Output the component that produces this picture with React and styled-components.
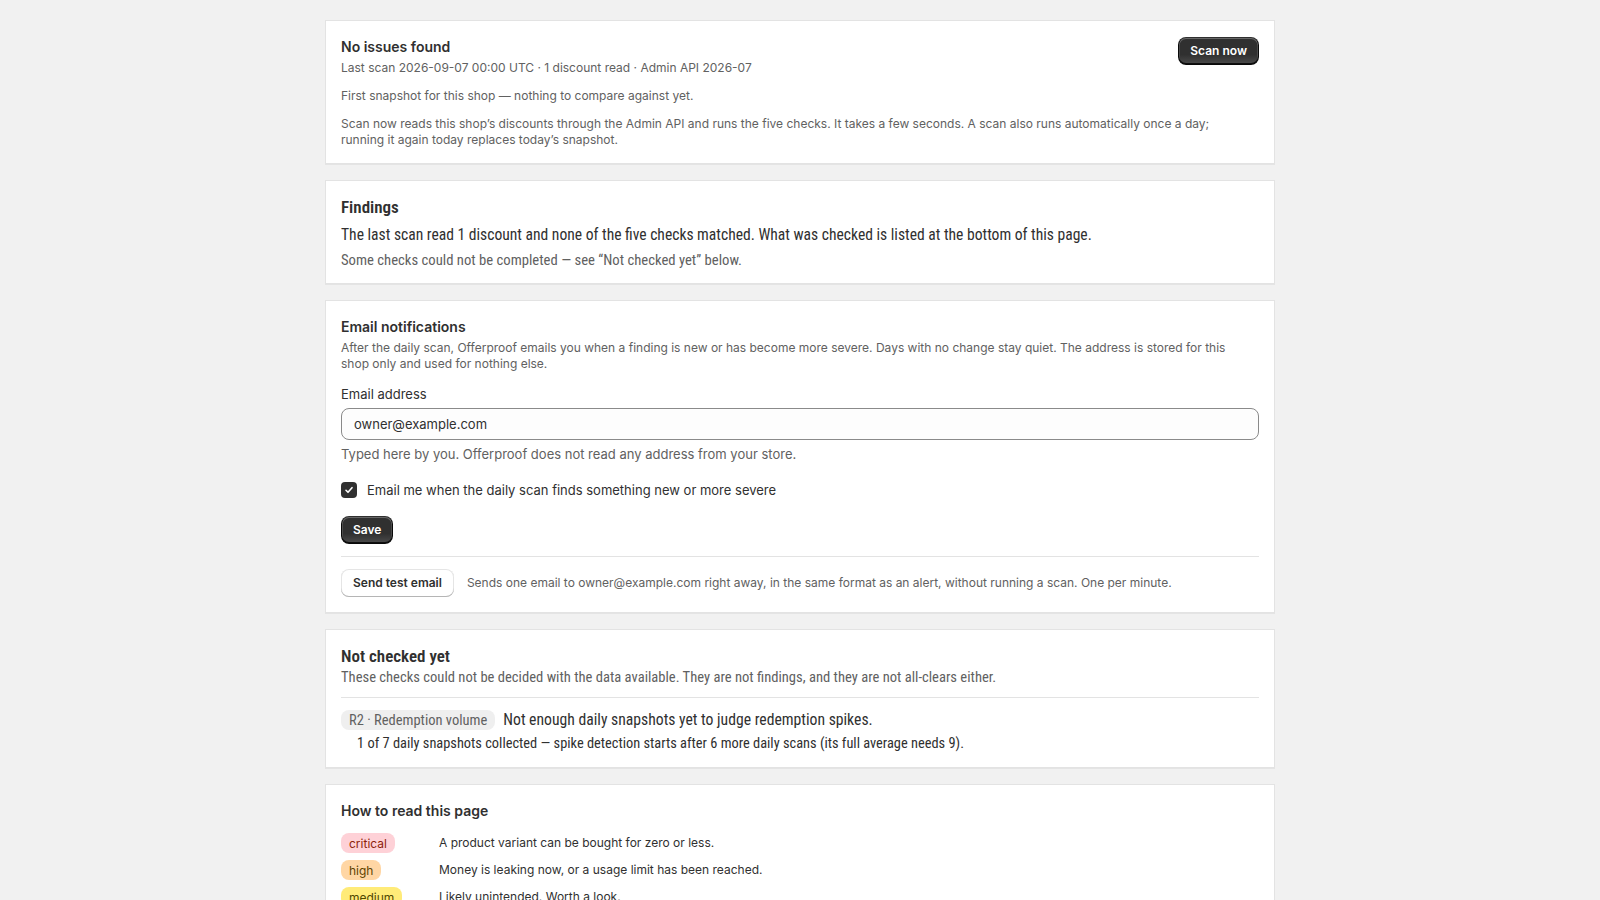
import React from "react";
import styled, { createGlobalStyle, css } from "styled-components";

const GlobalStyle = createGlobalStyle`
  html, body { margin: 0; padding: 0; background: #f1f1f1; }
  body {
    font-family: Inter, "Noto Sans", sans-serif;
    color: #303030;
    -webkit-font-smoothing: antialiased;
  }
  * { box-sizing: border-box; }
`;

const Page = styled.main`
  width: 950px;
  margin: 0 auto;
  padding: 20px 0;
  display: flex;
  flex-direction: column;
  gap: 16px;
`;

const narrowFont = css`
  font-family: "Roboto Condensed", Roboto, sans-serif;
  font-stretch: condensed;
`;

const Card = styled.section`
  background: #fff;
  border: 1px solid #e3e3e3;
  box-shadow: 0 1px 0 rgba(0, 0, 0, 0.05);
  padding: 17px 15px 15px;
  display: flex;
  flex-direction: column;
  gap: ${(p) => p.$gap || 0}px;
  ${(p) => p.$narrow && narrowFont}
`;

const HeaderRow = styled.div`
  display: flex;
  justify-content: space-between;
  align-items: flex-start;
  gap: 16px;
`;

const Title = styled.h2`
  margin: 0;
  font-size: ${(p) => (p.$narrow ? 17 : 14)}px;
  font-weight: 600;
  line-height: 18px;
  color: #303030;
`;

const Meta = styled.p`
  margin: ${(p) => p.$top || 0}px 0 0;
  max-width: 900px;
  font-size: ${(p) => p.$size || 12}px;
  line-height: 16px;
  color: #616161;
`;

const Lead = styled.p`
  margin: ${(p) => p.$top || 0}px 0 0;
  font-size: 15.6px;
  line-height: 20px;
  color: #303030;
`;

const buttonBase = css`
  display: inline-flex;
  align-items: center;
  justify-content: center;
  min-height: 28px;
  padding: 6px 12px;
  border: none;
  border-radius: 8px;
  font-family: Inter, sans-serif;
  font-size: 12px;
  font-weight: 600;
  line-height: 16px;
  cursor: pointer;
  white-space: nowrap;
  flex: none;
`;

const PrimaryButton = styled.button`
  ${buttonBase}
  color: #fff;
  background: #303030;
  background-image: linear-gradient(180deg, rgba(48, 48, 48, 0) 63%, rgba(255, 255, 255, 0.15) 100%);
  box-shadow: 0 -1px 0 1px rgba(0, 0, 0, 0.8) inset, 0 0 0 1px #303030 inset,
    0 0.5px 0 1.5px #666 inset;
  align-self: ${(p) => p.$align || "auto"};
  margin-top: ${(p) => p.$top || 0}px;
`;

const SecondaryButton = styled.button`
  ${buttonBase}
  color: #303030;
  background: #fff;
  box-shadow: 0 -1px 0 0 #b5b5b5 inset, 0 0 0 1px rgba(0, 0, 0, 0.1) inset,
    0 0.5px 0 1.5px #fff inset;
`;

const Field = styled.div`
  display: flex;
  flex-direction: column;
  margin-top: 12px;
`;

const Label = styled.label`
  font-size: 13px;
  line-height: 20px;
  color: #303030;
`;

const TextInput = styled.input`
  margin-top: 4px;
  height: 32px;
  padding: 0 12px;
  border: 1px solid #8a8a8a;
  border-radius: 8px;
  background: #fdfdfd;
  font-family: Inter, sans-serif;
  font-size: 13px;
  color: #303030;
  outline: none;
`;

const Help = styled.p`
  margin: 4px 0 0;
  font-size: 13px;
  line-height: 20px;
  color: #616161;
`;

const CheckRow = styled.label`
  display: flex;
  align-items: center;
  gap: 10px;
  margin-top: 16px;
  font-size: 13px;
  line-height: 20px;
  color: #303030;
`;

const CheckBox = styled.span`
  width: 16px;
  height: 16px;
  border-radius: 4px;
  background: #303030;
  display: inline-flex;
  align-items: center;
  justify-content: center;
  flex: none;
`;

const Divider = styled.hr`
  margin: ${(p) => p.$space || 12}px 0;
  border: none;
  border-top: 1px solid #e3e3e3;
`;

const TestRow = styled.div`
  display: flex;
  align-items: center;
  gap: 13px;
`;

const Hint = styled.span`
  font-size: 12px;
  line-height: 16px;
  color: #616161;
`;

const PendingRow = styled.div`
  display: flex;
  align-items: center;
  gap: 8px;
`;

const Tag = styled.span`
  display: inline-flex;
  align-items: center;
  height: 20px;
  padding: 0 8px;
  border-radius: 8px;
  background: #efefef;
  color: #616161;
  font-size: 14.5px;
`;

const PendingText = styled.span`
  font-size: 15.7px;
  line-height: 20px;
  color: #303030;
`;

const PendingDetail = styled.p`
  margin: 6px 0 0;
  padding-left: 16px;
  font-size: 14.4px;
  line-height: 16px;
  color: #303030;
`;

const Legend = styled.div`
  display: grid;
  grid-template-columns: 98px 1fr;
  row-gap: 7px;
  align-items: center;
  margin-top: 13px;
`;

const toneColors = {
  critical: { bg: "#fed1d7", fg: "#8e1f0b" },
  high: { bg: "#ffd6a4", fg: "#5e4200" },
  medium: { bg: "#ffeb78", fg: "#4f4700" },
  low: { bg: "#e0f0ff", fg: "#00527c" },
};

const Badge = styled.span`
  justify-self: start;
  display: inline-flex;
  align-items: center;
  height: 20px;
  padding: 0 8px;
  border-radius: 8px;
  font-size: 12px;
  background: ${(p) => toneColors[p.$tone].bg};
  color: ${(p) => toneColors[p.$tone].fg};
`;

const LegendText = styled.span`
  font-size: 12px;
  line-height: 20px;
  color: #303030;
`;

const CheckMark = () => (
  <svg width="12" height="12" viewBox="0 0 12 12" fill="none">
    <path d="M3 6.3l2 2 4-4.6" stroke="#fff" strokeWidth="1.6" strokeLinecap="round" strokeLinejoin="round" />
  </svg>
);

const legend = [
  { tone: "critical", text: "A product variant can be bought for zero or less." },
  { tone: "high", text: "Money is leaking now, or a usage limit has been reached." },
  { tone: "medium", text: "Likely unintended. Worth a look." },
  { tone: "low", text: "Worth knowing about, nothing urgent." },
];

export default function App() {
  return (
    <>
      <GlobalStyle />
      <Page>
        <Card $gap={12}>
          <HeaderRow>
            <div>
              <Title>No issues found</Title>
              <Meta $top={4}>Last scan 2026-09-07 00:00 UTC · 1 discount read · Admin API 2026-07</Meta>
            </div>
            <PrimaryButton $top={-1}>Scan now</PrimaryButton>
          </HeaderRow>
          <Meta>First snapshot for this shop — nothing to compare against yet.</Meta>
          <Meta>
            Scan now reads this shop’s discounts through the Admin API and runs the five checks. It takes a few
            seconds. A scan also runs automatically once a day; running it again today replaces today’s snapshot.
          </Meta>
        </Card>

        <Card $narrow>
          <Title $narrow>Findings</Title>
          <Lead $top={9}>
            The last scan read 1 discount and none of the five checks matched. What was checked is listed at the
            bottom of this page.
          </Lead>
          <Meta $top={7} $size={14.7}>
            Some checks could not be completed — see “Not checked yet” below.
          </Meta>
        </Card>

        <Card>
          <Title>Email notifications</Title>
          <Meta $top={4}>
            After the daily scan, Offerproof emails you when a finding is new or has become more severe. Days with
            no change stay quiet. The address is stored for this shop only and used for nothing else.
          </Meta>
          <Field>
            <Label htmlFor="alert-email">Email address</Label>
            <TextInput id="alert-email" type="email" defaultValue="owner@example.com" />
            <Help>Typed here by you. Offerproof does not read any address from your store.</Help>
          </Field>
          <CheckRow>
            <CheckBox>
              <CheckMark />
            </CheckBox>
            Email me when the daily scan finds something new or more severe
          </CheckRow>
          <PrimaryButton $align="flex-start" $top={16}>
            Save
          </PrimaryButton>
          <Divider $space={12} />
          <TestRow>
            <SecondaryButton>Send test email</SecondaryButton>
            <Hint>
              Sends one email to owner@example.com right away, in the same format as an alert, without running a
              scan. One per minute.
            </Hint>
          </TestRow>
        </Card>

        <Card $narrow>
          <Title $narrow>Not checked yet</Title>
          <Meta $top={4} $size={14.6}>
            These checks could not be decided with the data available. They are not findings, and they are not
            all-clears either.
          </Meta>
          <Divider $space={12} />
          <PendingRow>
            <Tag>R2 · Redemption volume</Tag>
            <PendingText>Not enough daily snapshots yet to judge redemption spikes.</PendingText>
          </PendingRow>
          <PendingDetail>
            1 of 7 daily snapshots collected — spike detection starts after 6 more daily scans (its full average
            needs 9).
          </PendingDetail>
        </Card>

        <Card>
          <Title>How to read this page</Title>
          <Legend>
            {legend.map((item) => (
              <React.Fragment key={item.tone}>
                <Badge $tone={item.tone}>{item.tone}</Badge>
                <LegendText>{item.text}</LegendText>
              </React.Fragment>
            ))}
          </Legend>
        </Card>
      </Page>
    </>
  );
}
